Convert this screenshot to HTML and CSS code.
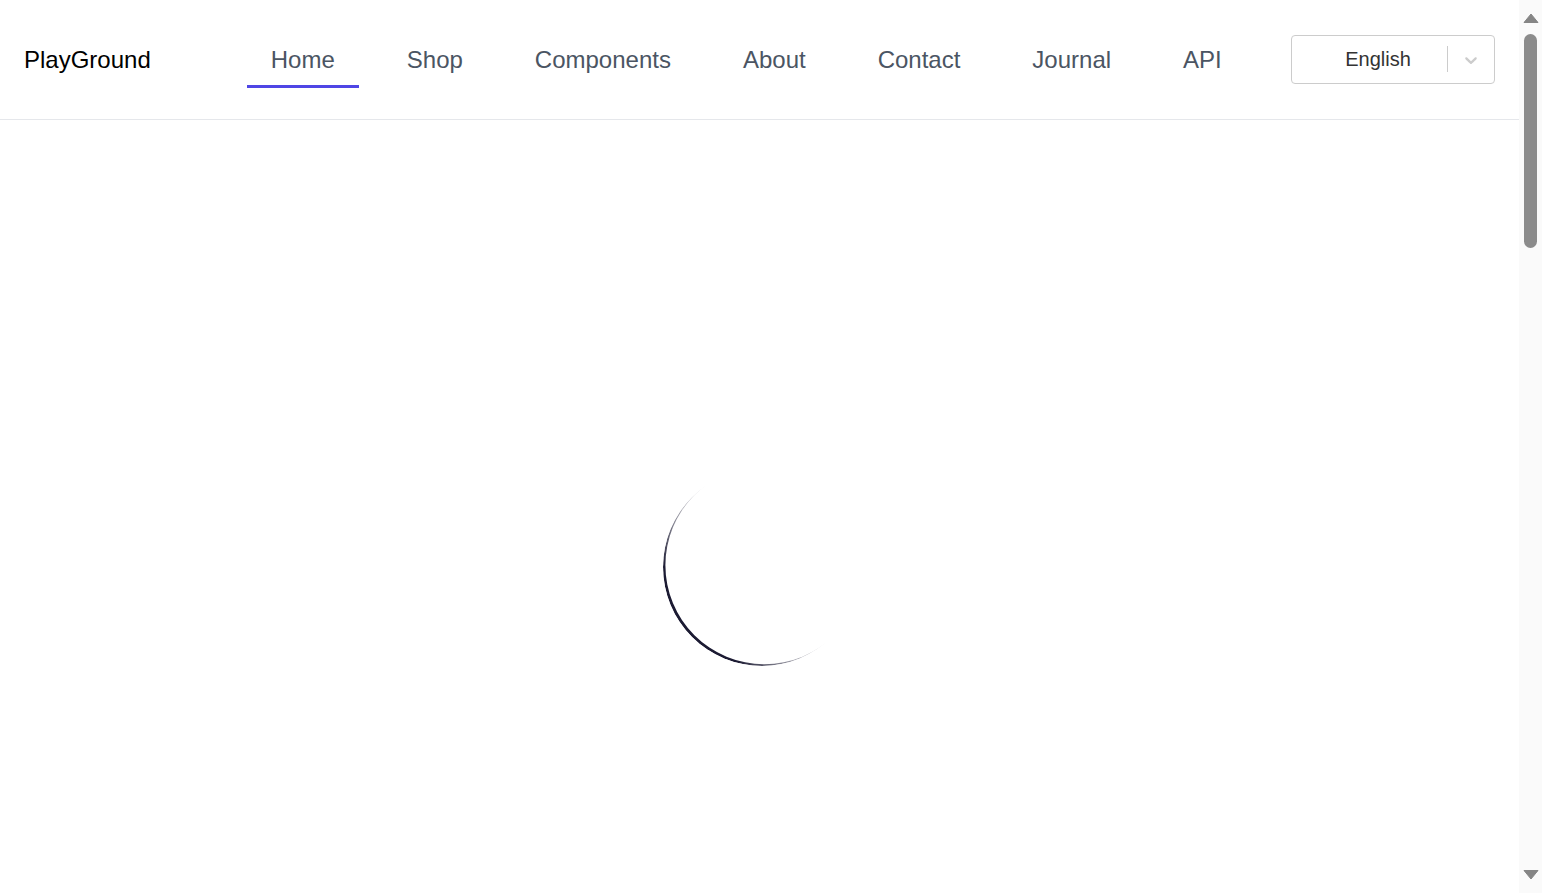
FILE: index.html
```html
<!DOCTYPE html>
<html lang="en">
<head>
<meta charset="utf-8">
<title>PlayGround</title>
<link rel="stylesheet" href="styles.css">
</head>
<body>
<div class="app">
  <div class="page">
    <header class="header">
      <div class="logo">PlayGround</div>
      <nav class="nav">
        <a class="nav-item active" href="#">Home</a>
        <a class="nav-item" href="#">Shop</a>
        <a class="nav-item" href="#">Components</a>
        <a class="nav-item" href="#">About</a>
        <a class="nav-item" href="#">Contact</a>
        <a class="nav-item" href="#">Journal</a>
        <a class="nav-item" href="#">API</a>
      </nav>
      <div class="select">
        <div class="select-value">English</div>
        <span class="select-sep"></span>
        <div class="select-indicator">
          <svg width="20" height="20" viewBox="0 0 20 20" aria-hidden="true"><path fill="currentColor" d="M4.516 7.548c0.436-0.446 1.043-0.481 1.576 0l3.908 3.747 3.908-3.747c0.533-0.481 1.141-0.446 1.574 0 0.436 0.445 0.408 1.197 0 1.615-0.406 0.418-4.695 4.502-4.695 4.502-0.217 0.223-0.502 0.335-0.787 0.335s-0.57-0.112-0.789-0.335c0 0-4.287-4.084-4.695-4.502s-0.436-1.17 0-1.615z"/></svg>
        </div>
      </div>
    </header>
    <main class="main">
      <div class="spinner"></div>
    </main>
  </div>
  <div class="scrollbar" aria-hidden="true">
    <div class="sb-btn sb-up">
      <svg width="16" height="10" viewBox="0 0 16 10"><path d="M8 1 L15 9.5 H1 Z" fill="#858585" stroke="#858585" stroke-width="1" stroke-linejoin="round"/></svg>
    </div>
    <div class="sb-track">
      <div class="sb-thumb"></div>
    </div>
    <div class="sb-btn sb-down">
      <svg width="16" height="10" viewBox="0 0 16 10"><path d="M1 0.5 H15 L8 9 Z" fill="#858585" stroke="#858585" stroke-width="1" stroke-linejoin="round"/></svg>
    </div>
  </div>
</div>
</body>
</html>
```

FILE: styles.css
```css
html, body {
  margin: 0;
  padding: 0;
  background: #fff;
  overflow: hidden;
}
body {
  font-family: "Liberation Sans", Arial, sans-serif;
}
.app {
  display: flex;
  height: 100vh;
}
.page {
  flex: 1;
  min-width: 0;
  overflow: hidden;
}
.scrollbar {
  width: 23px;
  flex: none;
  background: #fafafa;
  display: flex;
  flex-direction: column;
}
.sb-btn {
  height: 34px;
  display: flex;
  justify-content: center;
  padding-left: 1px;
  box-sizing: border-box;
}
.sb-btn svg {
  display: block;
}
.sb-up {
  padding-top: 13px;
}
.sb-down {
  padding-top: 11px;
}
.sb-track {
  flex: 1;
  padding: 0 5px;
}
.sb-thumb {
  height: 214px;
  background: #8b8b8b;
  border-radius: 7px;
}
.header {
  box-sizing: border-box;
  height: 120px;
  border-bottom: 1px solid #e5e7eb;
  display: flex;
  align-items: center;
  padding: 0 24px;
}
.logo {
  font-size: 24px;
  color: #000;
}
.nav {
  align-self: flex-start;
  display: flex;
  gap: 24px;
  margin-left: 96px;
}
.nav-item {
  box-sizing: border-box;
  height: 88px;
  padding: 35px 24px 0;
  display: flex;
  align-items: center;
  font-size: 24px;
  color: #4b5563;
  text-decoration: none;
  border-bottom: 3px solid transparent;
}
.nav-item.active {
  border-bottom-color: #4f46e5;
}
.select {
  margin-left: auto;
  box-sizing: border-box;
  width: 204px;
  height: 49px;
  border: 1px solid #cccccc;
  border-radius: 4px;
  display: flex;
  align-items: center;
}
.select-value {
  flex: 1;
  padding-left: 17px;
  text-align: center;
  font-size: 20px;
  color: #333;
}
.select-sep {
  align-self: stretch;
  width: 1px;
  margin: 10px 0 11px;
  background: #cccccc;
}
.select-indicator {
  width: 46px;
  display: flex;
  justify-content: center;
  align-items: center;
  color: #cccccc;
}
.select-indicator svg {
  display: block;
}
.main {
  min-height: 100vh;
  display: flex;
  align-items: center;
  justify-content: center;
  padding-left: 5px;
}
.spinner {
  width: 198px;
  height: 198px;
  border-radius: 50%;
  box-shadow: inset 2.4px -1.8px 0.4px #1c1b33;
  -webkit-mask-image: conic-gradient(transparent 0deg 138deg, #000 195deg 270deg, transparent 326deg 360deg);
  mask-image: conic-gradient(transparent 0deg 138deg, #000 195deg 270deg, transparent 326deg 360deg);
}
```
